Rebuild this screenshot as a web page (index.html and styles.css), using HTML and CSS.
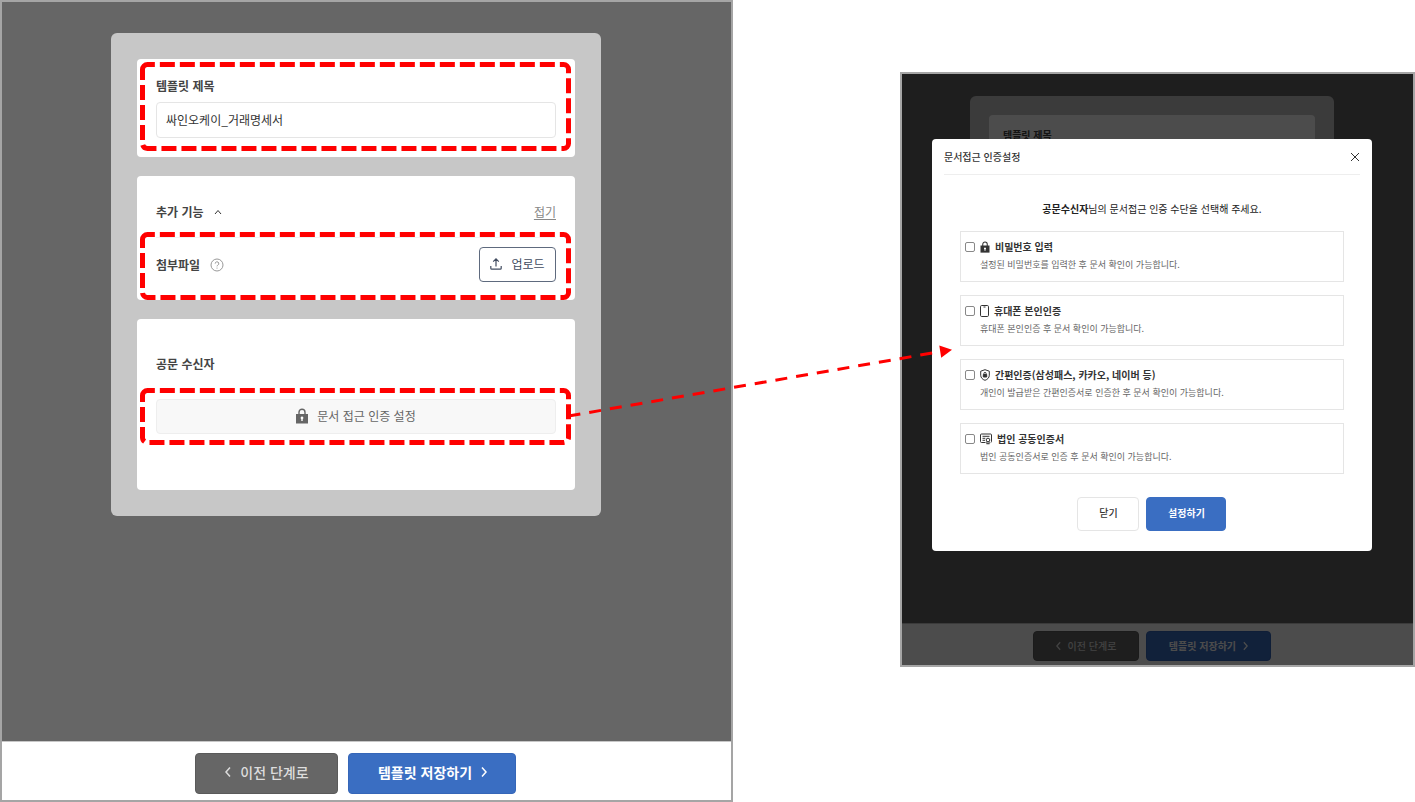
FILE: index.html
```html
<!DOCTYPE html>
<html lang="ko">
<head>
    <meta charset="UTF-8">
    <meta name="viewport" content="width=device-width, initial-scale=1.0">
    <title>문서 접근 인증 설정</title>
    <link rel="stylesheet" href="styles.css">
</head>
<body>
    <div class="guide">
        <!-- Template form -->
        <section class="screen">
            <main class="screen-body">
                <div class="panel">
                    <div class="card card-title">
                        <label class="label" for="templateTitle">템플릿 제목</label>
                        <input class="text-input" type="text" id="templateTitle" value="싸인오케이_거래명세서">
                        <svg class="highlight" viewBox="0 0 431 89" aria-hidden="true">
                            <path d="M2.5 7.5a5 5 0 0 1 5-5h416a5 5 0 0 1 5 5v74a5 5 0 0 1-5 5h-416a5 5 0 0 1-5-5z"/>
                        </svg>
                    </div>

                    <div class="card card-extra">
                        <div class="row extra-head">
                            <span class="label">추가 기능</span>
                            <svg class="caret" viewBox="0 0 8 6"><path d="M1 5l3-3.5L7 5"/></svg>
                            <a href="#" class="fold-link">접기</a>
                        </div>
                        <div class="row extra-file">
                            <span class="label">첨부파일</span>
                            <svg class="help" viewBox="0 0 14 14">
                                <circle cx="7" cy="7" r="6"/>
                                <path d="M5.2 5.6a1.8 1.8 0 1 1 2.6 1.6c-.6.3-.8.6-.8 1.2M7 9.6v1"/>
                            </svg>
                            <button type="button" class="upload-btn">
                                <svg viewBox="0 0 12 12"><path d="M6 8.5V1M3.2 3.6L6 .9l2.8 2.7M.8 8v2.2q0 1 1 1h8.400q1 0 1-1V8"/></svg>
                                업로드
                            </button>
                        </div>
                        <svg class="highlight" viewBox="0 0 431 68" aria-hidden="true">
                            <path d="M2.5 7.5a5 5 0 0 1 5-5h416a5 5 0 0 1 5 5v53a5 5 0 0 1-5 5h-416a5 5 0 0 1-5-5z"/>
                        </svg>
                    </div>

                    <div class="card card-receiver">
                        <span class="label">공문 수신자</span>
                        <button type="button" class="auth-btn">
                            <svg class="lock" viewBox="0 0 12 16">
                                <path class="shackle" d="M3 7V4.2a3 3 0 0 1 6 0V7"/>
                                <path d="M0 6h12v9.5H0z"/>
                                <path class="keyhole" d="M6 8.5a1.4 1.4 0 0 1 .7 2.6V13H5.3v-1.9A1.4 1.4 0 0 1 6 8.5z"/>
                            </svg>
                            문서 접근 인증 설정
                        </button>
                        <svg class="highlight" viewBox="0 0 431 57" aria-hidden="true">
                            <path d="M2.5 7.5a5 5 0 0 1 5-5h416a5 5 0 0 1 5 5v42a5 5 0 0 1-5 5h-416a5 5 0 0 1-5-5z"/>
                        </svg>
                    </div>
                </div>
            </main>
            <footer class="screen-footer">
                <button type="button" class="step-btn prev">
                    <svg viewBox="0 0 6 12"><path d="M5 1.500L1 6l4 4.500"/></svg>
                    이전 단계로
                </button>
                <button type="button" class="step-btn next">
                    템플릿 저장하기
                    <svg viewBox="0 0 6 12"><path d="M1 1.500L5 6l-4 4.500"/></svg>
                </button>
            </footer>
        </section>

        <!-- Same form with the auth dialog open -->
        <section class="screen screen-small">
            <div class="screen-body">
                <div class="panel">
                    <div class="card"><span class="label">템플릿 제목</span></div>
                </div>
            </div>
            <div class="screen-footer">
                <button type="button" class="step-btn prev">
                    <svg viewBox="0 0 6 12"><path d="M5 1.500L1 6l4 4.500"/></svg>
                    이전 단계로
                </button>
                <button type="button" class="step-btn next">
                    템플릿 저장하기
                    <svg viewBox="0 0 6 12"><path d="M1 1.500L5 6l-4 4.500"/></svg>
                </button>
            </div>

            <div class="overlay">
                <div class="modal" role="dialog" aria-labelledby="modalTitle">
                    <div class="modal-head">
                        <h2 id="modalTitle">문서접근 인증설정</h2>
                        <button type="button" class="close-btn" aria-label="닫기">
                            <svg viewBox="0 0 10 10"><path d="M1 1l8 8M9 1L1 9"/></svg>
                        </button>
                    </div>
                    <p class="modal-text"><strong>공문수신자</strong>님의 문서접근 인증 수단을 선택해 주세요.</p>

                    <div class="options">
                        <div class="option">
                            <input type="checkbox" id="authPassword">
                            <label for="authPassword">
                                <span class="option-title">
                                    <svg class="lock" viewBox="0 0 12 16">
                                        <path class="shackle" d="M3 7V4.2a3 3 0 0 1 6 0V7"/>
                                        <path d="M0 6h12v9.5H0z"/>
                                        <path class="keyhole" d="M6 8.5a1.4 1.4 0 0 1 .7 2.6V13H5.3v-1.9A1.4 1.4 0 0 1 6 8.5z"/>
                                    </svg>
                                    비밀번호 입력
                                </span>
                                <span class="option-desc">설정된 비밀번호를 입력한 후 문서 확인이 가능합니다.</span>
                            </label>
                        </div>
                        <div class="option">
                            <input type="checkbox" id="authPhone">
                            <label for="authPhone">
                                <span class="option-title">
                                    <svg class="line-icon phone" viewBox="0 0 9 12">
                                        <rect x=".5" y=".5" width="8" height="11" rx="1.2"/>
                                        <path d="M3.5 2h2"/>
                                    </svg>
                                    휴대폰 본인인증
                                </span>
                                <span class="option-desc">휴대폰 본인인증 후 문서 확인이 가능합니다.</span>
                            </label>
                        </div>
                        <div class="option">
                            <input type="checkbox" id="authSimple">
                            <label for="authSimple">
                                <span class="option-title">
                                    <svg class="line-icon shield" viewBox="0 0 10 12">
                                        <path d="M5 .7l4.300 1.500v4C9.300 8.700 7.500 10.500 5 11.300 2.500 10.500.7 8.700.7 6.200v-4z"/>
                                        <path class="solid" d="M3.300 5.500h3.400v2.500H3.300z"/>
                                        <path d="M3.900 5.200V4.500a1.100 1.100 0 0 1 2.200 0v.7"/>
                                    </svg>
                                    간편인증(삼성패스, 카카오, 네이버 등)
                                </span>
                                <span class="option-desc">개인이 발급받은 간편인증서로 인증한 후 문서 확인이 가능합니다.</span>
                            </label>
                        </div>
                        <div class="option">
                            <input type="checkbox" id="authCert">
                            <label for="authCert">
                                <span class="option-title">
                                    <svg class="line-icon cert" viewBox="0 0 12 11">
                                        <path d="M5.500 9H1.500q-1 0-1-1V1.500q0-1 1-1h9q1 0 1 1V8q0 .8-.8 1M2.500 2.800h7M2.500 4.800h2.800M2.500 6.800H5"/>
                                        <circle cx="8" cy="6.500" r="1.800"/>
                                        <path d="M6.900 8v2.600L8 9.900l1.100.7V8"/>
                                    </svg>
                                    법인 공동인증서
                                </span>
                                <span class="option-desc">법인 공동인증서로 인증 후 문서 확인이 가능합니다.</span>
                            </label>
                        </div>
                    </div>

                    <div class="modal-actions">
                        <button type="button" class="modal-btn">닫기</button>
                        <button type="button" class="modal-btn primary">설정하기</button>
                    </div>
                </div>
            </div>
        </section>

        <!-- Arrow from the auth button to the dialog -->
        <svg class="connector" viewBox="0 0 1415 802" aria-hidden="true">
            <path class="line" d="M568.5 416L934 352.7"/>
            <path class="head" d="M939.3 345.5l12.700 4.200-10.800 8z"/>
        </svg>
    </div>
</body>
</html>
```
FILE: styles.css
```css
* {
    box-sizing: border-box;
}
body {
    margin: 0;
    background: #fff;
    color: #333;
    font-family: "Noto Sans CJK KR", sans-serif;
    font-size: 12px;
    line-height: 18px;
}
button, input {
    font: inherit;
    color: inherit;
}
button {
    display: flex;
    align-items: center;
    justify-content: center;
    padding: 0 0 2px;
    border-radius: 4px;
    white-space: nowrap;
    cursor: pointer;
}
svg {
    display: block;
    flex: none;
    fill: none;
    stroke: currentColor;
}
.guide {
    position: relative;
    display: flex;
    justify-content: space-between;
    align-items: flex-start;
}

/* screens */
.screen {
    position: relative;
    display: flex;
    flex-direction: column;
    width: 51.8%;
    min-height: 100vh;
    border: 2px solid #a5a5a5;
}
.screen-body {
    flex: 1;
    display: flex;
    justify-content: center;
    align-items: flex-start;
    padding: 31px 21px 31px 0;
    background: #666;
}
.screen-footer {
    display: flex;
    justify-content: center;
    gap: 10px;
    padding: 11px 21px 6px 0;
    border-top: 1px solid #c7c7c7;
    background: #fff;
}
.step-btn {
    gap: 9px;
    height: 41px;
    padding-bottom: 3px;
    border: 1px solid #5a5a5a;
    font-size: 14px;
    font-weight: 500;
}
.step-btn svg {
    width: 6px;
    height: 12px;
    stroke-width: 1.5;
}
.step-btn.prev {
    width: 143px;
    background: #666;
    color: #ddd;
}
.step-btn.next {
    width: 168px;
    border-color: #3566b8;
    background: #3a6ec2;
    color: #fff;
    font-weight: 700;
}

/* form cards */
.panel {
    display: flex;
    flex-direction: column;
    gap: 19px;
    width: 100%;
    max-width: 490px;
    padding: 26px;
    border-radius: 6px;
    background: #c7c7c7;
}
.card {
    position: relative;
    display: flex;
    flex-direction: column;
    padding: 18px 19px;
    border-radius: 4px;
    background: #fff;
}
.card-title {
    gap: 7px;
    padding-bottom: 19px;
}
.card-extra {
    gap: 16px;
    padding-top: 27px;
}
.card-receiver {
    gap: 26px;
    padding-top: 36px;
    padding-bottom: 56px;
}
.label {
    color: #444;
    font-weight: 700;
}
.text-input {
    width: 100%;
    height: 36px;
    padding: 0 9px 1px;
    border: 1px solid #e5e5e5;
    border-radius: 4px;
    background: #fff;
}
.row {
    display: flex;
    align-items: center;
    gap: 10px;
}
.caret {
    width: 8px;
    height: 6px;
}
.help {
    width: 14px;
    height: 14px;
    color: #999;
}
.fold-link {
    margin-left: auto;
    color: #888;
    text-decoration: underline;
    text-underline-offset: 2px;
}
.extra-file {
    padding-top: 9px;
    border-top: 1px solid #f2f2f2;
}
.upload-btn {
    gap: 9px;
    width: 77px;
    height: 35px;
    margin-left: auto;
    border: 1px solid #5e6a7e;
    background: #fff;
    color: #414c60;
}
.upload-btn svg {
    width: 12px;
    height: 12px;
    stroke-width: 1.2;
}
.auth-btn {
    gap: 9px;
    height: 35px;
    border: 1px solid #eee;
    background: #f8f8f8;
    color: #666;
}
.lock {
    width: 12px;
    height: 16px;
    fill: currentColor;
    stroke: none;
}
.lock .shackle {
    fill: none;
    stroke: currentColor;
    stroke-width: 1.4;
}
.lock .keyhole {
    fill: #fff;
}

/* red marks */
.highlight {
    position: absolute;
    top: 3px;
    left: 3px;
    width: calc(100% - 7px);
    stroke: #f00;
    stroke-width: 5;
    stroke-dasharray: 15 5;
    pointer-events: none;
}
.card-extra .highlight {
    top: 56px;
}
.card-receiver .highlight {
    top: 69px;
}
.connector {
    position: absolute;
    top: 0;
    left: 0;
    width: 100%;
    pointer-events: none;
}
.connector .line {
    stroke: #f00;
    stroke-width: 3;
    stroke-dasharray: 12 9;
}
.connector .head {
    fill: #f00;
    stroke: none;
}

/* small screen with the dialog */
.screen-small {
    width: 36.4%;
    min-height: 0;
    margin-top: 72px;
    font-size: 10px;
}
.screen-small .screen-body {
    min-height: 549px;
    padding: 22px 11px 22px 0;
}
.screen-small .panel {
    max-width: 364px;
    padding: 19px;
}
.screen-small .card {
    min-height: 200px;
    padding: 11px 14px;
}
.screen-small .screen-footer {
    gap: 7px;
    padding: 7px 11px 4px 0;
}
.screen-small .step-btn {
    gap: 7px;
    height: 30px;
    padding-bottom: 1px;
    font-size: 10px;
}
.screen-small .step-btn svg {
    width: 5px;
    height: 10px;
}
.screen-small .prev {
    width: 106px;
}
.screen-small .next {
    width: 125px;
}
.overlay {
    position: absolute;
    inset: 0;
    display: flex;
    justify-content: center;
    align-items: flex-start;
    padding: 65px 11px 0 0;
    background: rgba(0, 0, 0, 0.7);
}
.modal {
    width: 100%;
    max-width: 440px;
    padding: 0 12px 20px;
    border-radius: 4px;
    background: #fff;
}
.modal-head {
    display: flex;
    justify-content: space-between;
    align-items: center;
    height: 36px;
    border-bottom: 1px solid #eee;
}
.modal-head h2 {
    margin: 0;
    font-size: 10px;
    font-weight: 500;
}
.close-btn {
    width: 10px;
    height: 10px;
    padding: 0;
    border: 0;
    background: none;
}
.close-btn svg {
    width: 10px;
    height: 10px;
}
.modal-text {
    margin: 25px 0 13px;
    text-align: center;
    color: #222;
}
.options {
    display: flex;
    flex-direction: column;
    gap: 13px;
    padding: 0 16px;
}
.option {
    display: flex;
    align-items: flex-start;
    gap: 5px;
    height: 51px;
    padding: 6px 4px;
    border: 1px solid #e5e5e5;
}
.option input {
    appearance: none;
    width: 10px;
    height: 10px;
    margin: 4px 0 0;
    border: 1px solid #888;
    border-radius: 2px;
    background: #fff;
}
.option input:checked {
    background: #3a6ec2;
}
.option-title {
    display: flex;
    align-items: center;
    gap: 5px;
    font-weight: 700;
}
.option-title .lock {
    width: 10px;
    height: 12px;
}
.line-icon {
    height: 12px;
}
.line-icon .solid {
    fill: currentColor;
}
.phone {
    width: 9px;
}
.shield {
    width: 10px;
}
.cert {
    width: 12px;
}
.option-desc {
    display: block;
    color: #666;
    font-size: 9px;
}
.modal-actions {
    display: flex;
    justify-content: center;
    gap: 7px;
    margin-top: 23px;
}
.modal-btn {
    width: 62px;
    height: 34px;
    border: 1px solid #e5e5e5;
    background: #fff;
    font-weight: 500;
}
.modal-btn.primary {
    width: 80px;
    border-color: #3a6ec2;
    background: #3a6ec2;
    color: #fff;
    font-weight: 700;
}
```
